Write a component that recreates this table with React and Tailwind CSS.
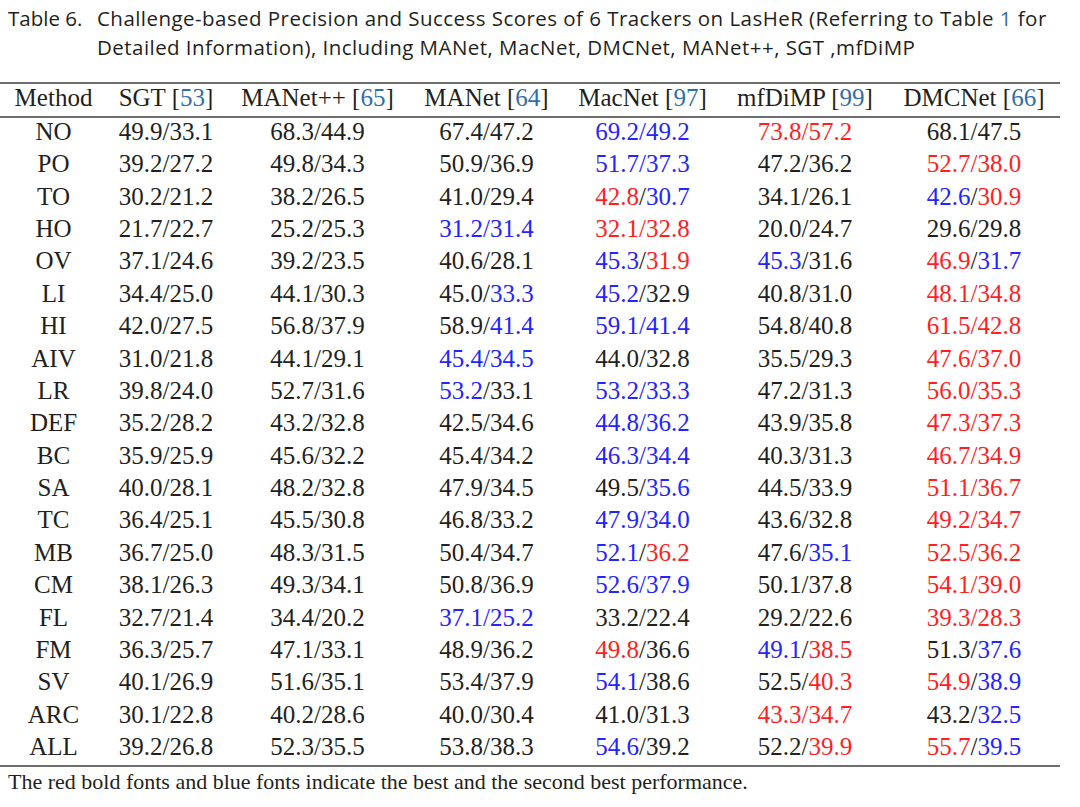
import React from 'react';

const cols = [
  { name: 'SGT', ref: 53 },
  { name: 'MANet++', ref: 65 },
  { name: 'MANet', ref: 64 },
  { name: 'MacNet', ref: 97 },
  { name: 'mfDiMP', ref: 99 },
  { name: 'DMCNet', ref: 66 },
];

// B = second best (blue), R = best (red)
const rows = [
  ['NO', '49.9/33.1', '68.3/44.9', '67.4/47.2', 'B69.2/B49.2', 'R73.8/R57.2', '68.1/47.5'],
  ['PO', '39.2/27.2', '49.8/34.3', '50.9/36.9', 'B51.7/B37.3', '47.2/36.2', 'R52.7/R38.0'],
  ['TO', '30.2/21.2', '38.2/26.5', '41.0/29.4', 'R42.8/B30.7', '34.1/26.1', 'B42.6/R30.9'],
  ['HO', '21.7/22.7', '25.2/25.3', 'B31.2/B31.4', 'R32.1/R32.8', '20.0/24.7', '29.6/29.8'],
  ['OV', '37.1/24.6', '39.2/23.5', '40.6/28.1', 'B45.3/R31.9', 'B45.3/31.6', 'R46.9/B31.7'],
  ['LI', '34.4/25.0', '44.1/30.3', '45.0/B33.3', 'B45.2/32.9', '40.8/31.0', 'R48.1/R34.8'],
  ['HI', '42.0/27.5', '56.8/37.9', '58.9/B41.4', 'B59.1/B41.4', '54.8/40.8', 'R61.5/R42.8'],
  ['AIV', '31.0/21.8', '44.1/29.1', 'B45.4/B34.5', '44.0/32.8', '35.5/29.3', 'R47.6/R37.0'],
  ['LR', '39.8/24.0', '52.7/31.6', 'B53.2/33.1', 'B53.2/B33.3', '47.2/31.3', 'R56.0/R35.3'],
  ['DEF', '35.2/28.2', '43.2/32.8', '42.5/34.6', 'B44.8/B36.2', '43.9/35.8', 'R47.3/R37.3'],
  ['BC', '35.9/25.9', '45.6/32.2', '45.4/34.2', 'B46.3/B34.4', '40.3/31.3', 'R46.7/R34.9'],
  ['SA', '40.0/28.1', '48.2/32.8', '47.9/34.5', '49.5/B35.6', '44.5/33.9', 'R51.1/R36.7'],
  ['TC', '36.4/25.1', '45.5/30.8', '46.8/33.2', 'B47.9/B34.0', '43.6/32.8', 'R49.2/R34.7'],
  ['MB', '36.7/25.0', '48.3/31.5', '50.4/34.7', 'B52.1/R36.2', '47.6/B35.1', 'R52.5/R36.2'],
  ['CM', '38.1/26.3', '49.3/34.1', '50.8/36.9', 'B52.6/B37.9', '50.1/37.8', 'R54.1/R39.0'],
  ['FL', '32.7/21.4', '34.4/20.2', 'B37.1/B25.2', '33.2/22.4', '29.2/22.6', 'R39.3/R28.3'],
  ['FM', '36.3/25.7', '47.1/33.1', '48.9/36.2', 'R49.8/36.6', 'B49.1/R38.5', '51.3/B37.6'],
  ['SV', '40.1/26.9', '51.6/35.1', '53.4/37.9', 'B54.1/38.6', '52.5/R40.3', 'R54.9/B38.9'],
  ['ARC', '30.1/22.8', '40.2/28.6', '40.0/30.4', '41.0/31.3', 'R43.3/R34.7', '43.2/B32.5'],
  ['ALL', '39.2/26.8', '52.3/35.5', '53.8/38.3', 'B54.6/39.2', '52.2/R39.9', 'R55.7/B39.5'],
];

const colorOf = (c) => (c === 'B' ? 'text-[#2424ff]' : c === 'R' ? 'text-[#ff1f1f]' : 'text-[#231f20]');

const parse = (s) => {
  const c = s[0] === 'B' || s[0] === 'R' ? s[0] : '';
  return [c, c ? s.slice(1) : s];
};

const Score = ({ value }) => {
  const [a, b] = value.split('/');
  const [ca, va] = parse(a);
  const [cb, vb] = parse(b);
  return (
    <>
      <span className={colorOf(ca)}>{va}</span>
      <span className={colorOf(ca === cb ? ca : '')}>/</span>
      <span className={colorOf(cb)}>{vb}</span>
    </>
  );
};

export default function App() {
  return (
    <div className="w-[1080px] h-[807px] bg-white text-[#231f20] overflow-hidden">
      <div
        className="flex pl-[8px] pt-[4px] text-[20.5px] tracking-[0.45px] leading-[29px] text-[#231f20] whitespace-nowrap"
        style={{ fontFamily: '"Open Sans", sans-serif' }}
      >
        <span className="w-[89px] shrink-0 tracking-normal">Table 6.</span>
        <span>
          Challenge-based Precision and Success Scores of 6 Trackers on LasHeR (Referring to Table{' '}
          <span className="text-[#2f6ea8]">1</span> for
          <br />
          Detailed Information), Including MANet, MacNet, DMCNet, MANet++, SGT ,mfDiMP
        </span>
      </div>

      <table
        className="mt-[20px] w-[1060px] table-fixed border-collapse text-[25px] text-center"
        style={{ fontFamily: '"Liberation Serif", serif' }}
      >
        <colgroup>
          <col className="w-[107px]" />
          <col className="w-[118px]" />
          <col className="w-[185px]" />
          <col className="w-[153px]" />
          <col className="w-[159px]" />
          <col className="w-[166px]" />
          <col className="w-[172px]" />
        </colgroup>
        <thead>
          <tr className="h-[34px] border-t-2 border-b-2 border-[#6e6e6e]">
            <th className="font-normal p-0 pb-[4px] leading-[28px] whitespace-nowrap">Method</th>
            {cols.map((c) => (
              <th key={c.name} className="font-normal p-0 pb-[4px] leading-[28px] whitespace-nowrap">
                {c.name} [<span className="text-[#2f6ea8]">{c.ref}</span>]
              </th>
            ))}
          </tr>
        </thead>
        <tbody className="border-b-2 border-[#6e6e6e]">
          {rows.map(([label, ...vals]) => (
            <tr key={label} className="h-[32.4px]">
              <td className="p-0 pb-[4px] leading-[28px]">{label}</td>
              {vals.map((v, i) => (
                <td key={i} className="p-0 pb-[4px] leading-[28px] whitespace-nowrap">
                  <Score value={v} />
                </td>
              ))}
            </tr>
          ))}
        </tbody>
      </table>

      <div className="pl-[8px] pt-0 text-[22px] leading-[30px]" style={{ fontFamily: '"Liberation Serif", serif' }}>
        The red bold fonts and blue fonts indicate the best and the second best performance.
      </div>
    </div>
  );
}
